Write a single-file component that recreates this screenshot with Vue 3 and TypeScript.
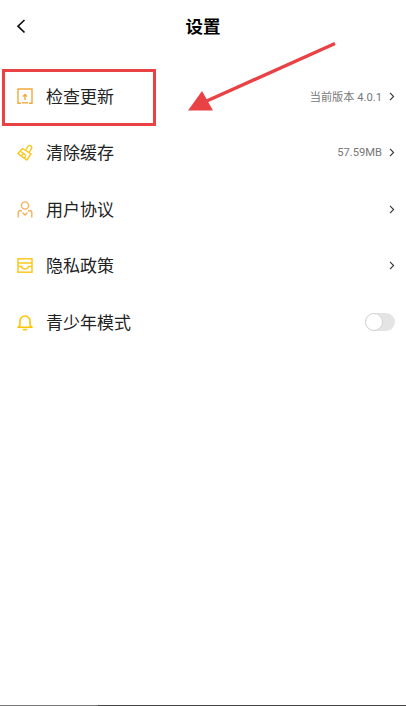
<script setup lang="ts">
interface Row { label: string; value?: string; icon: string; toggle?: boolean }
const rows: Row[] = [
  { label: '检查更新', value: '当前版本 4.0.1', icon: 'update' },
  { label: '清除缓存', value: '57.59MB', icon: 'brush' },
  { label: '用户协议', icon: 'user' },
  { label: '隐私政策', icon: 'inbox' },
  { label: '青少年模式', icon: 'bell', toggle: true },
]
</script>

<template>
  <div class="page">
    <header class="header">
      <svg class="back" width="12" height="18" viewBox="0 0 12 18">
        <path d="M9.5 3 L3 9.2 L9.500 15.5" fill="none" stroke="#111" stroke-width="1.7" />
      </svg>
      <h1 class="title">设置</h1>
    </header>

    <ul class="list">
      <li v-for="row in rows" :key="row.label" class="row">
        <span class="icon">
          <svg v-if="row.icon === 'update'" width="16" height="16" viewBox="0 0 16 16" fill="none" stroke="#f2a93a" stroke-width="1.4">
            <path d="M4 15.200H1V1h14v14.200h-3" />
            <path d="M5 14.800h6" />
            <path d="M8 12V6.500M6 8.500l2-2 2 2" />
          </svg>
          <svg v-else-if="row.icon === 'brush'" width="16" height="17" viewBox="0 0 16 17" fill="none" stroke="#f9c71f" stroke-width="1.4">
            <path d="M5.500 4.500 L14 10 L9.800 16 L1 9.500 Z" />
            <path d="M8.500 6.500 L11 2.200 Q12.200 0.800 13.800 1.700 Q15.300 2.800 14.500 4.300 L12 8.800" />
            <path d="M3.800 7.500l5.500 4M4 12.500l2-2.500M7 14.500l1.800-2.300" />
          </svg>
          <svg v-else-if="row.icon === 'user'" width="16" height="17" viewBox="0 0 16 17" fill="none" stroke="#f4b257" stroke-width="1.4">
            <circle cx="8" cy="4.500" r="3.600" />
            <path d="M5 9.800H2.500Q1.200 9.800 1.200 11.200V16.400M11 9.800h2.500q1.300 0 1.300 1.400v5.200" />
            <path d="M5.500 11.500 L8 14 L10.500 11.500" />
          </svg>
          <svg v-else-if="row.icon === 'inbox'" width="16" height="15" viewBox="0 0 16 15" fill="none" stroke="#fbc91f" stroke-width="1.5">
            <rect x="1" y="0.800" width="14" height="13.400" />
            <path d="M1 5h14M1 8.600h3.600Q5.200 11 8 11t3.400-2.400H15" />
          </svg>
          <svg v-else width="16" height="17" viewBox="0 0 16 17" fill="none" stroke="#fdc400" stroke-width="1.6">
            <path d="M1 13.200Q3 12.600 3 9.500V7a5 5 0 0 1 10 0v2.500q0 3.100 2 3.700Z" stroke-linejoin="round" />
            <path d="M5.800 15.600h4.400" />
          </svg>
        </span>
        <span class="label">{{ row.label }}</span>
        <span v-if="row.value" class="value">{{ row.value }}</span>
        <svg v-if="!row.toggle" class="chevron" width="6" height="9" viewBox="0 0 6 9">
          <path d="M1 .8 L4.600 4.500 L1 8.200" fill="none" stroke="#333" stroke-width="1.1" />
        </svg>
        <span v-else class="switch"><span class="knob"></span></span>
      </li>
    </ul>

    <div class="frame"></div>
    <svg class="arrow" width="406" height="130" viewBox="0 0 406 130">
      <path d="M335 43.500 L200 104" stroke="#e94245" stroke-width="3.400" fill="none" />
      <path d="M188 110.500 L213 110.500 L202 91 Z" fill="#e94245" />
    </svg>

    <div class="home-line"><span class="home-left"></span></div>
  </div>
</template>

<style>
html, body { margin: 0; background: #fff; }
</style>

<style scoped>
.page {
  position: relative;
  width: 406px;
  height: 706px;
  overflow: hidden;
  background: #fff;
  font-family: "Noto Sans CJK SC", "Liberation Sans", sans-serif;
}
.header {
  display: flex;
  align-items: center;
  justify-content: center;
  position: relative;
  height: 52px;
}
.back {
  position: absolute;
  left: 15px;
  top: 17px;
}
.title {
  margin: 0;
  font-size: 17.500px;
  font-weight: 700;
  color: #000;
  line-height: 24px;
}
.list {
  list-style: none;
  margin: 0;
  padding: 16px 11px 0 17px;
}
.row {
  display: flex;
  align-items: center;
  height: 56.500px;
}
.icon {
  display: flex;
  align-items: center;
  justify-content: center;
  width: 16px;
  margin-right: 13px;
}
.label {
  flex: 1;
  font-size: 17px;
  color: #222;
  position: relative;
  top: -1px;
}
.value {
  font-size: 11.200px;
  color: #777;
  margin-right: 7px;
  font-family: "Roboto", "Noto Sans CJK SC", sans-serif;
}
.chevron {
  flex: none;
}
.switch {
  position: relative;
  width: 30px;
  height: 18px;
  border-radius: 9px;
  background: #e4e4e4;
}
.knob {
  position: absolute;
  left: 0;
  top: 0;
  width: 16px;
  height: 16px;
  border-radius: 50%;
  background: #fff;
  border: 1px solid #d4d4d4;
}
.frame {
  position: absolute;
  left: 2px;
  top: 69px;
  width: 154px;
  height: 57px;
  box-sizing: border-box;
  border: 3px solid #e94245;
}
.arrow {
  position: absolute;
  left: 0;
  top: 0;
  pointer-events: none;
}
.home-line {
  position: absolute;
  left: 0;
  right: 0;
  bottom: 0;
  height: 1px;
  background: #444;
}
.home-left {
  display: block;
  width: 98px;
  height: 1px;
  background: #777;
}
</style>
